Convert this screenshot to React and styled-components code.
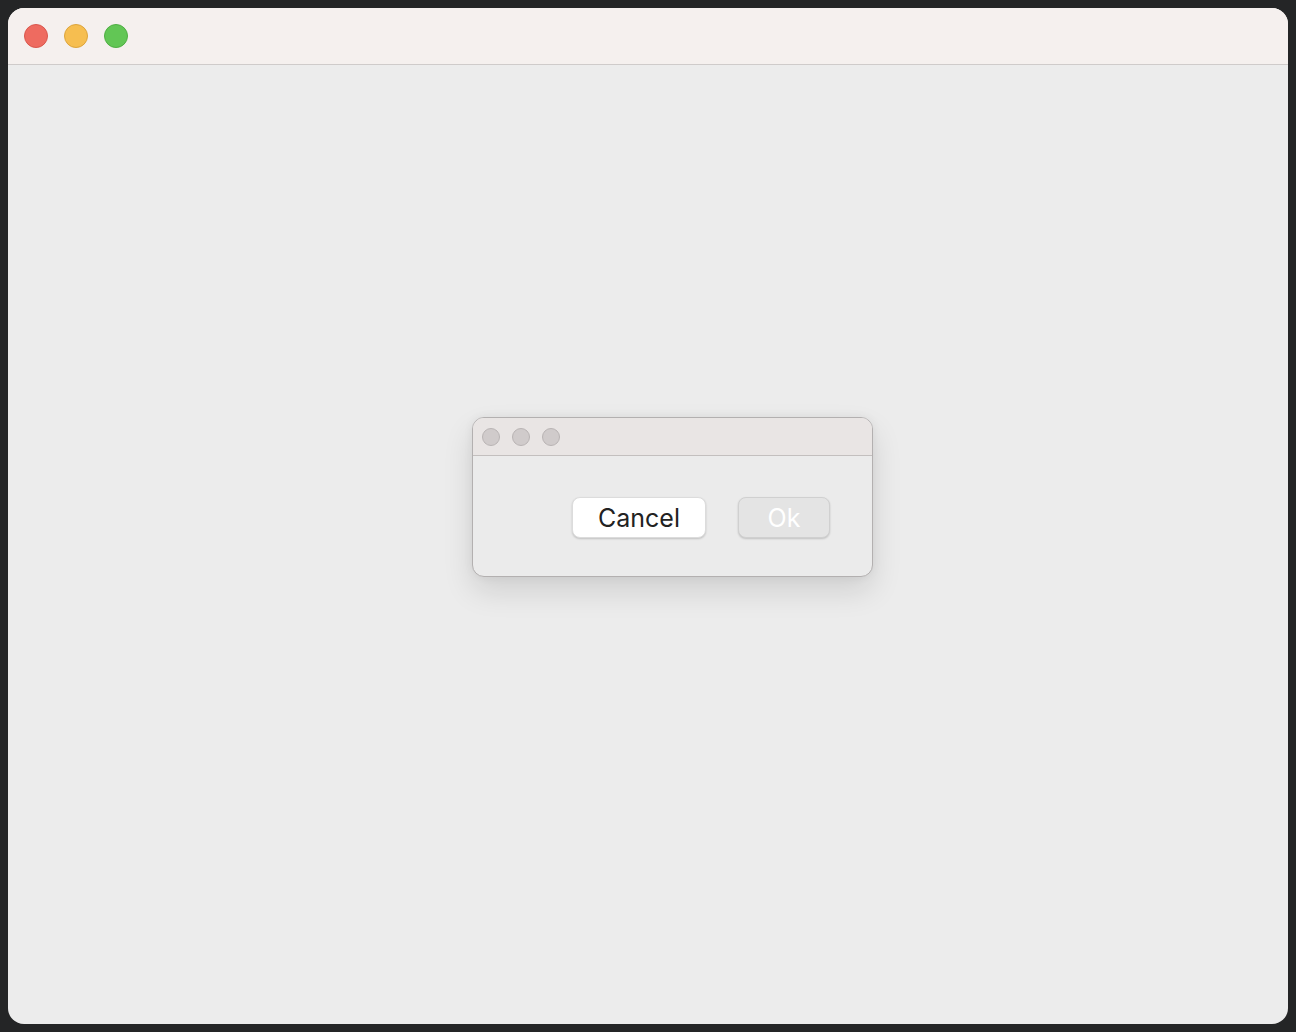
import React from "react";
import styled, { createGlobalStyle } from "styled-components";

const Global = createGlobalStyle`
  html, body { margin: 0; padding: 0; background: #242526; }
  body { font-family: Inter, "Liberation Sans", sans-serif; }
`;

const Screen = styled.div`
  width: 1296px;
  height: 1032px;
  box-sizing: border-box;
  padding: 8px;
  background: #242526;
`;

const Window = styled.div`
  width: 100%;
  height: 100%;
  border-radius: 16px;
  overflow: hidden;
  display: flex;
  flex-direction: column;
  background: #ececec;
`;

const TitleBar = styled.div`
  height: ${(p) => p.$h}px;
  flex: none;
  display: flex;
  align-items: center;
  gap: ${(p) => p.$gap}px;
  padding-left: ${(p) => p.$pad}px;
  box-sizing: border-box;
  background: ${(p) => p.$bg};
  border-bottom: 1px solid ${(p) => p.$line};
`;

const Light = styled.span`
  width: ${(p) => p.$size}px;
  height: ${(p) => p.$size}px;
  border-radius: 50%;
  box-sizing: border-box;
  background: ${(p) => p.$c};
  border: 1px solid ${(p) => p.$b};
`;

const Body = styled.div`
  flex: 1;
  display: flex;
  align-items: flex-start;
  justify-content: flex-start;
  padding: 352px 0 0 464px;
`;

const Dialog = styled.div`
  width: 401px;
  height: 160px;
  box-sizing: border-box;
  border: 1px solid #b3b0b0;
  border-radius: 12px;
  overflow: hidden;
  background: #ebebeb;
  display: flex;
  flex-direction: column;
  box-shadow: 0 14px 30px rgba(0, 0, 0, 0.12), 0 0 10px rgba(0, 0, 0, 0.06);
`;

const DialogBody = styled.div`
  flex: 1;
  display: flex;
  align-items: flex-start;
  justify-content: flex-end;
  gap: 32px;
  padding: 41px 42px 0 0;
`;

const Button = styled.button`
  height: 41px;
  width: ${(p) => p.$w}px;
  box-sizing: border-box;
  border-radius: 8px;
  font-family: Inter, "Liberation Sans", sans-serif;
  font-size: 25px;
  padding: 0;
  display: flex;
  align-items: center;
  justify-content: center;
  background: ${(p) => (p.disabled ? "#e4e4e4" : "#ffffff")};
  color: ${(p) => (p.disabled ? "#ffffff" : "#222222")};
  border: 1px solid ${(p) => (p.disabled ? "#d0d0d0" : "#dcdcdc")};
  box-shadow: 0 1px 2px rgba(0, 0, 0, 0.18);
`;

export default function App() {
  return (
    <>
      <Global />
      <Screen>
        <Window>
          <TitleBar $h={57} $gap={16} $pad={16} $bg="#f5f0ee" $line="#cfcbca">
            <Light $size={24} $c="#ee6b60" $b="#d9574d" />
            <Light $size={24} $c="#f6be50" $b="#dca43c" />
            <Light $size={24} $c="#62c655" $b="#4fae43" />
          </TitleBar>
          <Body>
            <Dialog>
              <TitleBar $h={38} $gap={12} $pad={9} $bg="#e9e5e4" $line="#c3bfbe">
                <Light $size={18} $c="#d0cbcb" $b="#b9b4b4" />
                <Light $size={18} $c="#d0cbcb" $b="#b9b4b4" />
                <Light $size={18} $c="#d0cbcb" $b="#b9b4b4" />
              </TitleBar>
              <DialogBody>
                <Button $w={134}>Cancel</Button>
                <Button $w={92} disabled>Ok</Button>
              </DialogBody>
            </Dialog>
          </Body>
        </Window>
      </Screen>
    </>
  );
}
